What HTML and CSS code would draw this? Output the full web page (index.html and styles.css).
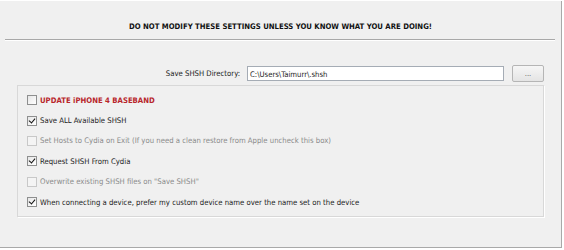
FILE: index.html
```html
<!DOCTYPE html>
<html>
<head>
<meta charset="utf-8">
<link rel="stylesheet" href="styles.css">
</head>
<body>
<div class="panel">
  <div class="title">DO NOT MODIFY THESE SETTINGS UNLESS YOU KNOW WHAT YOU ARE DOING!</div>
  <div class="sep"></div>
  <div class="dir-row">
    <span class="dir-label">Save SHSH Directory:</span>
    <div class="dir-input">C:\Users\Taimurr\.shsh</div>
    <div class="dir-btn">...</div>
  </div>
  <div class="group">
    <div class="row"><span class="cb"></span><span class="lbl red">UPDATE iPHONE 4 BASEBAND</span></div>
    <div class="row"><span class="cb checked"></span><span class="lbl">Save ALL Available SHSH</span></div>
    <div class="row disabled"><span class="cb"></span><span class="lbl">Set Hosts to Cydia on Exit (If you need a clean restore from Apple uncheck this box)</span></div>
    <div class="row"><span class="cb checked"></span><span class="lbl">Request SHSH From Cydia</span></div>
    <div class="row disabled"><span class="cb"></span><span class="lbl">Overwrite existing SHSH files on "Save SHSH"</span></div>
    <div class="row"><span class="cb checked"></span><span class="lbl">When connecting a device, prefer my custom device name over the name set on the device</span></div>
  </div>
</div>
</body>
</html>
```
FILE: styles.css
```css
html, body {
  margin: 0;
  padding: 0;
  background: #ffffff;
}
body {
  width: 564px;
  height: 250px;
  overflow: hidden;
  font-family: "DejaVu Sans Condensed", "DejaVu Sans", sans-serif;
  font-size: 7.7px;
  color: #1b1b1b;
}
.panel {
  margin-top: 1px;
  width: 562px;
  height: 247px;
  box-sizing: border-box;
  background: #f0f0f0;
  border-right: 1px solid #a9a9a9;
  border-bottom: 1px solid #a9a9a9;
  display: flex;
  flex-direction: column;
}
.title {
  height: 38px;
  display: flex;
  align-items: center;
  justify-content: center;
  font-weight: bold;
  color: #111;
  padding-top: 12px;
  box-sizing: border-box;
}
.sep {
  margin: 0 6px 0 5px;
  border-top: 1px solid #a8a8a8;
  border-bottom: 1px solid #ffffff;
}
.dir-row {
  display: flex;
  align-items: center;
  height: 20px;
  margin: 22px 17px 2px 17px;
}
.dir-label {
  margin-left: auto;
  margin-right: 7px;
  color: #222;
}
.dir-input {
  width: 257px;
  height: 15px;
  box-sizing: border-box;
  background: #fff;
  border: 1px solid #a5acb5;
  padding: 2px 3px 0 2px;
  line-height: 11px;
}
.dir-btn {
  margin-left: 8px;
  width: 32px;
  height: 17px;
  box-sizing: border-box;
  border: 1px solid #b5b5b5;
  border-radius: 2px;
  background: linear-gradient(#f6f6f6, #e4e4e4);
  color: #666;
  display: flex;
  align-items: center;
  justify-content: center;
}
.group {
  margin: 0 17px;
  height: 132px;
  box-sizing: border-box;
  border: 1px solid #d8d8d8;
  box-shadow: 1px 1px 0 #ffffff;
  padding: 4px 0 0 9px;
  display: flex;
  flex-direction: column;
}
.row {
  display: flex;
  align-items: center;
  height: 20.4px;
}
.cb {
  width: 10px;
  height: 10px;
  box-sizing: border-box;
  border: 1px solid #8e8f8f;
  background: linear-gradient(135deg, #e6e6e6, #ffffff);
  margin-right: 3px;
  position: relative;
  flex: none;
}
.cb.checked::after {
  content: "";
  position: absolute;
  left: 2px;
  top: 0px;
  width: 3px;
  height: 5px;
  border-right: 1.5px solid #111;
  border-bottom: 1.5px solid #111;
  transform: rotate(40deg);
}
.disabled .cb {
  border-color: #c8c8c8;
  background: #f4f4f4;
}
.disabled .lbl {
  color: #8a8a8a;
}
.red {
  color: #b8252b;
  font-weight: bold;
}
```
